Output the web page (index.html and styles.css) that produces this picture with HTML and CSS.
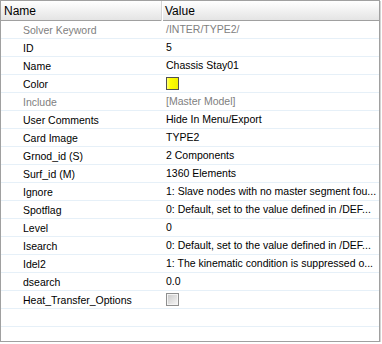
FILE: index.html
```html
<!DOCTYPE html>
<html>
<head>
<meta charset="utf-8">
<link rel="stylesheet" href="styles.css">
</head>
<body>
<div class="grid">
  <div class="head">
    <div class="hcell hname">Name</div>
    <div class="hcell hvalue">Value</div>
  </div>
  <div class="row dim"><div class="k">Solver Keyword</div><div class="v">/INTER/TYPE2/</div></div>
  <div class="row"><div class="k">ID</div><div class="v">5</div></div>
  <div class="row"><div class="k">Name</div><div class="v">Chassis Stay01</div></div>
  <div class="row"><div class="k">Color</div><div class="v"><span class="swatch"></span></div></div>
  <div class="row dim"><div class="k">Include</div><div class="v">[Master Model]</div></div>
  <div class="row"><div class="k">User Comments</div><div class="v">Hide In Menu/Export</div></div>
  <div class="row"><div class="k">Card Image</div><div class="v">TYPE2</div></div>
  <div class="row"><div class="k">Grnod_id (S)</div><div class="v">2 Components</div></div>
  <div class="row"><div class="k">Surf_id (M)</div><div class="v">1360 Elements</div></div>
  <div class="row"><div class="k">Ignore</div><div class="v">1: Slave nodes with no master segment fou...</div></div>
  <div class="row"><div class="k">Spotflag</div><div class="v">0: Default, set to the value defined in /DEF...</div></div>
  <div class="row"><div class="k">Level</div><div class="v">0</div></div>
  <div class="row"><div class="k">Isearch</div><div class="v">0: Default, set to the value defined in /DEF...</div></div>
  <div class="row"><div class="k">Idel2</div><div class="v">1: The kinematic condition is suppressed o...</div></div>
  <div class="row"><div class="k">dsearch</div><div class="v">0.0</div></div>
  <div class="row"><div class="k">Heat_Transfer_Options</div><div class="v"><span class="check"></span></div></div>
  <div class="row"><div class="k"></div><div class="v"></div></div>
  <div class="row"><div class="k"></div><div class="v"></div></div>
</div>
</body>
</html>
```

FILE: styles.css
```css
html, body {
  margin: 0;
  padding: 0;
  background: #ffffff;
}
.grid {
  width: 378px;
  height: 340px;
  border: 1px solid #a0a0a0;
  box-shadow: 1px 1px 0 #d4d4d4;
  overflow: hidden;
  font-family: "Liberation Sans", Arial, sans-serif;
  font-size: 10.5px;
  color: #000;
  background: #fff;
}
.head {
  display: grid;
  grid-template-columns: 161px 1fr;
  height: 19px;
  border-bottom: 1px solid #a0a0a0;
  background: linear-gradient(to bottom, #ffffff 0%, #f3f3f3 45%, #e4e4e4 100%);
}
.hcell {
  font-size: 12px;
  line-height: 20px;
  white-space: nowrap;
}
.hname {
  padding-left: 3px;
  border-right: 1px solid #d5d5d5;
  box-shadow: 1px 0 0 #ffffff;
}
.hvalue {
  padding-left: 3px;
}
.row {
  display: grid;
  grid-template-columns: 161px 1fr;
  height: 17px;
  border-bottom: 1px solid #e6f0f8;
}
.k {
  padding-left: 22px;
  line-height: 19px;
  white-space: nowrap;
  overflow: hidden;
}
.v {
  padding-left: 4px;
  line-height: 19px;
  white-space: nowrap;
  overflow: hidden;
  display: flex;
  align-items: center;
}
.dim .k, .dim .v {
  color: #808080;
}
.swatch {
  display: block;
  width: 11px;
  height: 11px;
  border: 1px solid #505050;
  background: linear-gradient(to right, #ffff80 0%, #ffff00 30%, #f0f000 100%);
}
.check {
  display: block;
  width: 11px;
  height: 11px;
  border: 1px solid #8e8f8f;
  background: linear-gradient(135deg, #c8c8c8 0%, #e4e4e4 60%, #f7f7f7 100%);
  box-shadow: inset 0 0 0 1px #f4f4f4;
}
```
